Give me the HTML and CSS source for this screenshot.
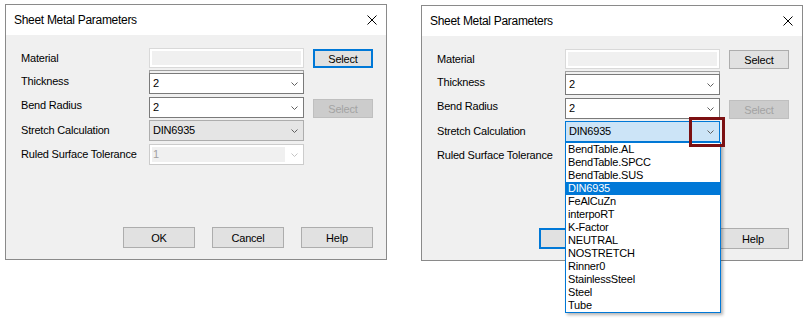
FILE: index.html
```html
<!DOCTYPE html>
<html lang="en">
<head>
<meta charset="utf-8">
<title>Sheet Metal Parameters</title>
<link rel="stylesheet" href="styles.css">
</head>
<body>
<div class="stage">
  <section class="dialog">
    <header class="titlebar">
      <span class="title">Sheet Metal Parameters</span>
      <svg class="close" viewBox="0 0 10 10" width="10" height="10"><path d="M0.5 0.5 L9.5 9.5 M9.5 0.5 L0.5 9.5" stroke="#000" stroke-width="1" fill="none"/></svg>
    </header>
    <div class="body">
      <div class="form">
        <div class="lbl r1">Material</div>
        <div class="field-material r1"></div>
        <button class="btn btn-select btn-focus r1">Select</button>
        <div class="frag r2"></div>
        <div class="lbl lbl-hi r3">Thickness</div>
        <div class="combo r3"><span class="combo-text">2</span><svg class="chev" width="7" height="4" viewBox="0 0 7 4"><polyline points="0.5,0.5 3.5,3.5 6.5,0.5" fill="none" stroke="#606060" stroke-width="1"/></svg></div>
        <div class="lbl lbl-hi r4">Bend Radius</div>
        <div class="combo r4"><span class="combo-text">2</span><svg class="chev" width="7" height="4" viewBox="0 0 7 4"><polyline points="0.5,0.5 3.5,3.5 6.5,0.5" fill="none" stroke="#606060" stroke-width="1"/></svg></div>
        <button class="btn btn-select btn-dis r4">Select</button>
        <div class="lbl r5">Stretch Calculation</div>
        <div class="combo combo-ro r5"><span class="combo-text">DIN6935</span><svg class="chev" width="7" height="4" viewBox="0 0 7 4"><polyline points="0.5,0.5 3.5,3.5 6.5,0.5" fill="none" stroke="#606060" stroke-width="1"/></svg></div>
        <div class="lbl r6">Ruled Surface Tolerance</div>
        <div class="combo combo-dis r6"><span class="combo-text">1</span><svg class="chev" width="7" height="4" viewBox="0 0 7 4"><polyline points="0.5,0.5 3.5,3.5 6.5,0.5" fill="none" stroke="#c4c4c4" stroke-width="1"/></svg></div>
      </div>
      <div class="footer">
        <button class="btn btn-wide">OK</button>
        <button class="btn btn-wide">Cancel</button>
        <button class="btn btn-wide">Help</button>
      </div>
    </div>
  </section>

  <section class="dialog dialog-b">
    <header class="titlebar">
      <span class="title">Sheet Metal Parameters</span>
      <svg class="close" viewBox="0 0 10 10" width="10" height="10"><path d="M0.5 0.5 L9.5 9.5 M9.5 0.5 L0.5 9.5" stroke="#000" stroke-width="1" fill="none"/></svg>
    </header>
    <div class="body">
      <div class="form">
        <div class="lbl r1">Material</div>
        <div class="field-material r1"></div>
        <button class="btn btn-select r1">Select</button>
        <div class="frag r2"></div>
        <div class="lbl lbl-hi r3">Thickness</div>
        <div class="combo r3"><span class="combo-text">2</span><svg class="chev" width="7" height="4" viewBox="0 0 7 4"><polyline points="0.5,0.5 3.5,3.5 6.5,0.5" fill="none" stroke="#606060" stroke-width="1"/></svg></div>
        <div class="lbl lbl-hi r4">Bend Radius</div>
        <div class="combo r4"><span class="combo-text">2</span><svg class="chev" width="7" height="4" viewBox="0 0 7 4"><polyline points="0.5,0.5 3.5,3.5 6.5,0.5" fill="none" stroke="#606060" stroke-width="1"/></svg></div>
        <button class="btn btn-select btn-dis r4">Select</button>
        <div class="lbl r5">Stretch Calculation</div>
        <div class="combo combo-focus r5"><span class="combo-text">DIN6935</span><svg class="chev" width="7" height="4" viewBox="0 0 7 4"><polyline points="0.5,0.5 3.5,3.5 6.5,0.5" fill="none" stroke="#606060" stroke-width="1"/></svg>
          <div class="mark"></div>
          <ul class="list">
            <li>BendTable.AL</li>
            <li>BendTable.SPCC</li>
            <li>BendTable.SUS</li>
            <li class="sel">DIN6935</li>
            <li>FeAlCuZn</li>
            <li>interpoRT</li>
            <li>K-Factor</li>
            <li>NEUTRAL</li>
            <li>NOSTRETCH</li>
            <li>Rinner0</li>
            <li>StainlessSteel</li>
            <li>Steel</li>
            <li>Tube</li>
          </ul>
        </div>
        <div class="lbl r6">Ruled Surface Tolerance</div>
        <div class="combo combo-dis combo-hidden r6"></div>
      </div>
      <div class="footer">
        <button class="btn btn-wide btn-focus">OK</button>
        <button class="btn btn-wide">Cancel</button>
        <button class="btn btn-wide">Help</button>
      </div>
    </div>
  </section>
</div>
</body>
</html>
```

FILE: styles.css
```css
* { box-sizing: border-box; margin: 0; padding: 0; }
html, body { background: #fff; }
body {
  min-height: 318px;
  font-family: "Liberation Sans", Arial, sans-serif;
  font-size: 11px;
  letter-spacing: -0.2px;
  color: #000;
}
.stage {
  display: flex;
  align-items: flex-start;
  gap: 34px;
  padding: 4px 0 0 5px;
  min-height: 318px;
}
.dialog {
  width: 382px;
  height: 256px;
  border: 1px solid #8a8a8a;
  background: #f0f0f0;
  display: flex;
  flex-direction: column;
  flex: 0 0 auto;
}
.dialog-b { margin-top: 1px; }
.titlebar {
  height: 30px;
  background: #fff;
  display: flex;
  align-items: center;
  justify-content: space-between;
  padding: 0 9px 0 8px;
}
.title { font-size: 12px; letter-spacing: -0.3px; }
.close { display: block; }
.body {
  flex: 1;
  display: flex;
  flex-direction: column;
  padding: 13px 13px 11px 15px;
}
.form {
  display: grid;
  grid-template-columns: 128px 155px 69px;
  grid-template-rows: 20px 5px 24px 23px 24px 21px;
  align-items: start;
}
.r1 { grid-row: 1; }
.r2 { grid-row: 2; }
.r3 { grid-row: 3; }
.r4 { grid-row: 4; }
.r5 { grid-row: 5; }
.r6 { grid-row: 6; }
.lbl {
  grid-column: 1;
  line-height: 13px;
  padding-top: 4px;
  white-space: nowrap;
}
.lbl-hi { padding-top: 2px; }
.field-material {
  grid-column: 2;
  height: 20px;
  border: 1px solid #d9d9d9;
  background: #f0f0f0;
  box-shadow: inset 0 0 0 2px #fff;
}
.frag {
  grid-column: 2;
  margin-top: 2px;
  height: 3px;
  border: 1px solid #a0a0a0;
  border-bottom: none;
}
.combo {
  grid-column: 2;
  height: 21px;
  border: 1px solid #7a7a7a;
  background: #fff;
  display: flex;
  align-items: center;
  padding-left: 3px;
}
.combo-text {
  flex: 1;
  line-height: 19px;
  white-space: nowrap;
}
.chev { display: block; margin-right: 5px; flex: 0 0 auto; }
.combo-ro { background: #e5e5e5; border-color: #adadad; }
.combo-focus {
  background: #cce4f7;
  border-color: #0078d7;
  position: relative;
}
.combo-dis {
  border-color: #cccccc;
  padding: 2px 0 2px 2px;
}
.combo-dis .combo-text {
  flex: 0 0 133px;
  align-self: stretch;
  background: #f0f0f0;
  color: #a0a0a0;
  line-height: 15px;
  padding-left: 1px;
}
.combo-dis .chev { margin-left: auto; }
.btn {
  font: inherit;
  letter-spacing: inherit;
  color: #000;
  background: #e1e1e1;
  border: 1px solid #adadad;
  text-align: center;
  padding: 0;
}
.btn-focus { border: 2px solid #0078d7; }
.btn-select {
  grid-column: 3;
  justify-self: end;
  width: 60px;
  height: 19px;
  margin-top: 1px;
}
.btn-dis {
  background: #cccccc;
  border-color: #bfbfbf;
  color: #a3a3a3;
  margin-top: 2px;
}
.footer {
  margin-top: auto;
  display: flex;
  justify-content: flex-end;
  gap: 17px;
}
.btn-wide { width: 72px; height: 21px; }
.mark {
  position: absolute;
  left: 123px;
  top: -5px;
  width: 36px;
  height: 30px;
  border: 3px solid #7c1012;
  z-index: 11;
}
.list {
  position: absolute;
  left: -1px;
  top: calc(100% + 1px);
  width: 156px;
  list-style: none;
  background: #fff;
  border: 1px solid #0078d7;
  box-shadow: 2px 2px 3px rgba(0, 0, 0, 0.3);
  z-index: 10;
}
.list li {
  height: 13px;
  line-height: 13px;
  padding-left: 2px;
  white-space: nowrap;
}
.list li.sel { background: #0078d7; color: #fff; }
```
